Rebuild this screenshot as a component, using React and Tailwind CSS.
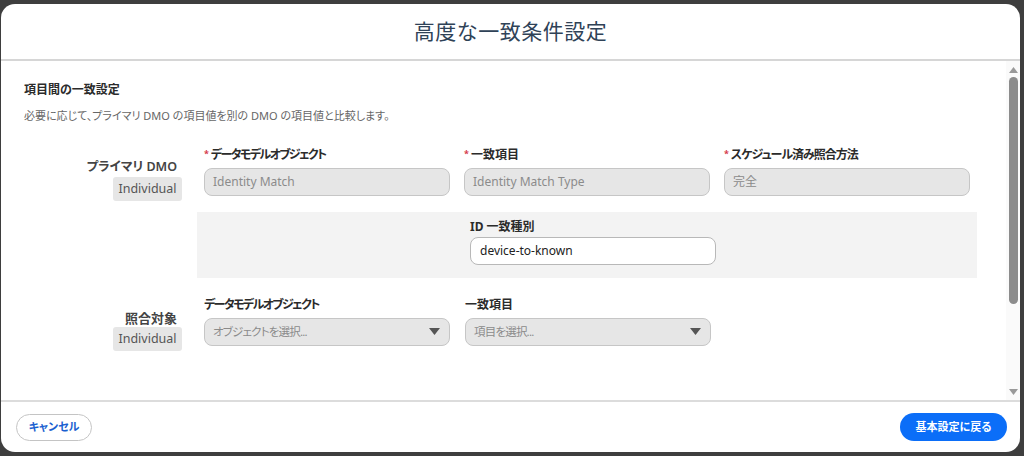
import React from "react";

const font = { fontFamily: '"Noto Sans", "Noto Sans CJK JP", sans-serif' };

function FieldLabel({ required, className = "", children }) {
  return (
    <div className="h-[18px] flex items-center text-[12px] font-bold text-[#2b2b2b] leading-none">
      {required && <span className="text-[#d4384a] text-[9px] mr-[2px] -mt-[4px]">*</span>}
      <span className={className}>{children}</span>
    </div>
  );
}

function ReadOnlyInput({ value }) {
  return (
    <div className="h-[28px] rounded-[8px] border border-[#c6c6c6] bg-[#e6e6e6] px-[8px] flex items-center text-[12px] text-[#8b8b8b]">
      {value}
    </div>
  );
}

function SelectBox({ placeholder }) {
  return (
    <div className="h-[28px] rounded-[8px] border border-[#c6c6c6] bg-[#e6e6e6] pl-[8px] pr-[9px] flex items-center justify-between text-[11.5px] text-[#8b8b8b]">
      <span className="tracking-[-0.8px]">{placeholder}</span>
      <svg width="11" height="8" viewBox="0 0 11 8">
        <path d="M0 0 L11 0 L5.5 7 Z" fill="#555" />
      </svg>
    </div>
  );
}

function Badge({ children }) {
  return (
    <div className="h-[24px] w-[69px] rounded-[3px] bg-[#e6e6e6] flex items-center justify-center text-[12.5px] text-[#555]">
      {children}
    </div>
  );
}

export default function App() {
  return (
    <div
      className="w-[1024px] h-[456px] bg-[#3e3e3e] pt-[4px] pl-[1px] overflow-hidden [font-feature-settings:'palt']"
      style={font}
    >
      <div className="w-[1019px] h-[448px] bg-white rounded-[14px] flex flex-col overflow-hidden">
        {/* header */}
        <div className="h-[57px] shrink-0 border-b-2 border-[#d6d6d6] flex items-center justify-center">
          <h1 className="text-[21px] text-[#2f4257] tracking-[0.5px] [font-feature-settings:normal]">高度な一致条件設定</h1>
        </div>

        {/* scrollable body */}
        <div className="flex-1 flex min-h-0">
          <div className="flex-1 pl-[23px] pt-[19px]">
            <h2 className="text-[12px] font-bold text-[#2b2b2b] leading-[20px]">項目間の一致設定</h2>
            <p className="mt-[6px] text-[11px] text-[#666] leading-[20px]">
              必要に応じて、プライマリ DMO の項目値を別の DMO の項目値と比較します。
            </p>

            {/* primary DMO */}
            <div className="mt-[20px] flex">
              <div className="w-[158px] flex flex-col items-end pt-[12px]">
                <div className="text-[12.5px] font-semibold text-[#444] leading-[18px] mr-[5px]">プライマリ DMO</div>
                <div className="mt-[1px]">
                  <Badge>Individual</Badge>
                </div>
              </div>
              <div className="ml-[22px] grid grid-cols-[246px_246px_246px] gap-x-[14px]">
                <div>
                  <FieldLabel required className="tracking-[-1.6px]">データモデルオブジェクト</FieldLabel>
                  <div className="mt-[4px]">
                    <ReadOnlyInput value="Identity Match" />
                  </div>
                </div>
                <div>
                  <FieldLabel required>一致項目</FieldLabel>
                  <div className="mt-[4px]">
                    <ReadOnlyInput value="Identity Match Type" />
                  </div>
                </div>
                <div>
                  <FieldLabel required className="tracking-[-1px]">スケジュール済み照合方法</FieldLabel>
                  <div className="mt-[4px]">
                    <ReadOnlyInput value="完全" />
                  </div>
                </div>
              </div>
            </div>

            {/* identity match type */}
            <div className="mt-[11px] ml-[173px] w-[780px] h-[66px] bg-[#f3f3f3] pt-[6px] pl-[273px]">
              <div className="w-[246px]">
                <FieldLabel>ID 一致種別</FieldLabel>
                <div className="mt-[1px] h-[28px] rounded-[8px] border border-[#b8b8b8] bg-white px-[9px] flex items-center text-[12px] text-[#222]">
                  device-to-known
                </div>
              </div>
            </div>

            {/* match target */}
            <div className="mt-[18px] flex">
              <div className="w-[158px] flex flex-col items-end pt-[13px]">
                <div className="text-[13px] font-semibold text-[#444] leading-[18px] mr-[5px]">照合対象</div>
                <div>
                  <Badge>Individual</Badge>
                </div>
              </div>
              <div className="ml-[22px] grid grid-cols-[246px_246px] gap-x-[15px]">
                <div>
                  <FieldLabel className="tracking-[-1.6px]">データモデルオブジェクト</FieldLabel>
                  <div className="mt-[4px]">
                    <SelectBox placeholder="オブジェクトを選択..." />
                  </div>
                </div>
                <div>
                  <FieldLabel>一致項目</FieldLabel>
                  <div className="mt-[4px]">
                    <SelectBox placeholder="項目を選択..." />
                  </div>
                </div>
              </div>
            </div>
          </div>

          {/* scrollbar */}
          <div className="w-[14px] shrink-0 bg-[#fafafa] flex flex-col items-center pt-[6px] pb-[5px]">
            <svg width="9" height="6" viewBox="0 0 9 6">
              <path d="M4.5 0 L9 6 L0 6 Z" fill="#999" />
            </svg>
            <div className="mt-[4px] w-[9px] h-[227px] rounded-full bg-[#8c8c8c]" />
            <div className="flex-1" />
            <svg width="9" height="6" viewBox="0 0 9 6">
              <path d="M0 0 L9 0 L4.5 6 Z" fill="#999" />
            </svg>
          </div>
        </div>

        {/* footer */}
        <div className="h-[52px] shrink-0 border-t-2 border-[#dcdcdc] flex items-center justify-between pl-[15px] pr-[13px]">
          <button className="h-[27px] w-[76px] rounded-full border border-[#c4c4c4] bg-white text-[11px] font-bold text-[#1a5fd0]">
            キャンセル
          </button>
          <button className="h-[28px] w-[107px] rounded-full bg-[#0b6ef8] text-[11px] font-bold text-white">
            基本設定に戻る
          </button>
        </div>
      </div>
    </div>
  );
}
